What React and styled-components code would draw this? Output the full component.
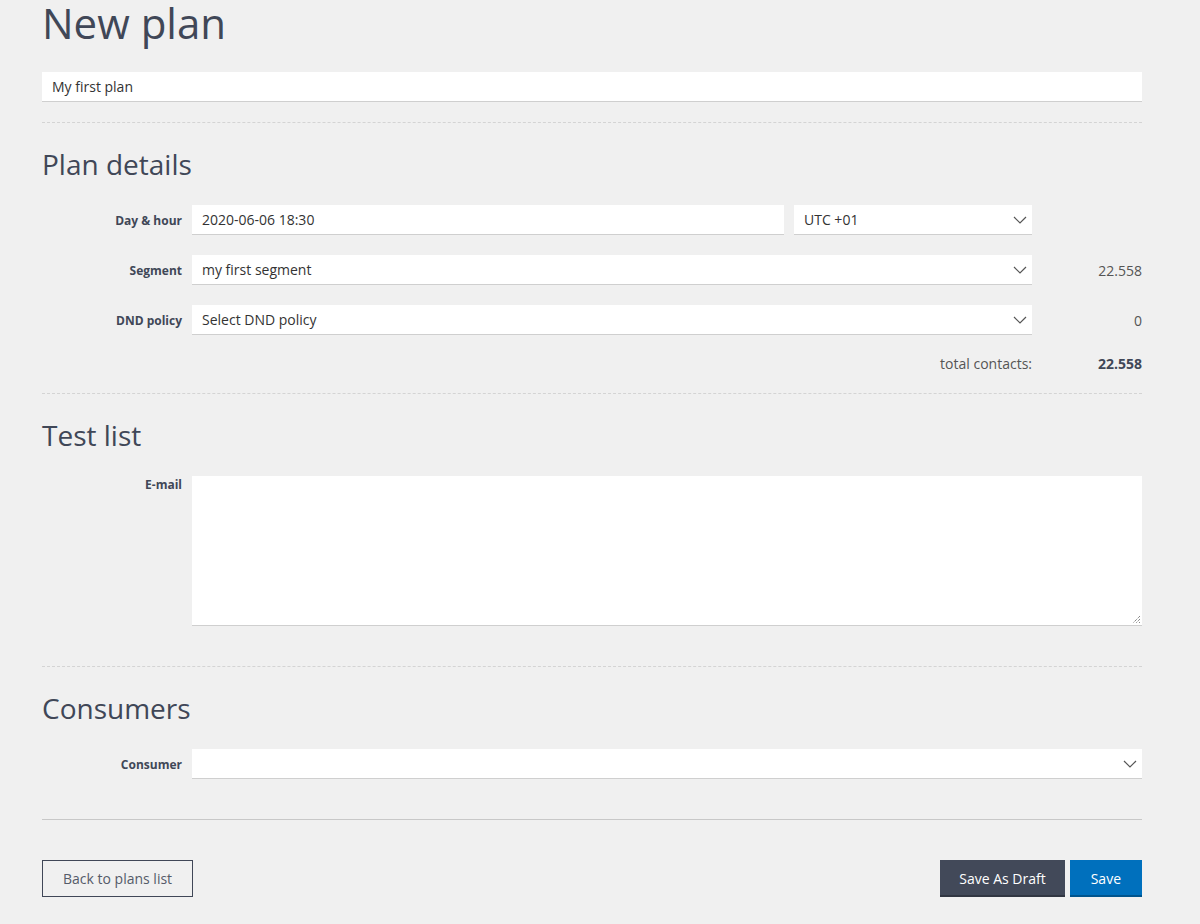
import React from "react";
import styled, {createGlobalStyle} from "styled-components";

const GlobalStyle = createGlobalStyle`
    html, body {
        margin: 0;
        padding: 0;
        background: #f0f0f0;
    }

    body {
        font-family: "Open Sans", "Liberation Sans", sans-serif;
        font-size: 14px;
        color: #333;
    }

    * {
        box-sizing: border-box;
    }
`;

const Page = styled.div`
    width: 1100px;
    margin-left: 42px;
`;

const Title = styled.h1`
    margin: 0 0 26px;
    font-weight: 400;
    font-size: 42px;
    line-height: 46px;
    color: #404757;
`;

const Divider = styled.hr`
    margin: 0;
    border: 0;
    border-top: 1px ${(props) => (props.solid ? "solid #c8c8c8" : "dashed #d4d4d4")};
`;

const Section = styled.section`
    padding: 24px 0 ${(props) => props.bottom || 40}px;
`;

const SectionTitle = styled.h2`
    margin: 0 0 24px;
    font-weight: 400;
    font-size: 28px;
    line-height: 34px;
    color: #404757;
`;

const Row = styled.div`
    display: grid;
    grid-template-columns: 140px ${(props) => (props.wide ? "1fr" : "840px 1fr")};
    column-gap: 10px;
    align-items: ${(props) => (props.top ? "start" : "center")};

    & + & {
        margin-top: 20px;
    }
`;

const Label = styled.label`
    padding-top: 1px;
    font-weight: 700;
    font-size: 12px;
    line-height: 16px;
    color: #404757;
    text-align: right;
`;

const Field = styled.div`
    display: flex;
    align-items: center;
    height: 30px;
    padding: 0 ${(props) => (props.select ? 5 : 10)}px 0 10px;
    background: #fff;
    border-bottom: 1px solid #cfcfcf;
    color: #333;
    font-size: 14px;
    flex: ${(props) => props.grow || "none"};
    width: ${(props) => (props.width ? `${props.width}px` : "auto")};
`;

const NameField = styled(Field)`
    margin-bottom: 20px;
`;

const FieldGroup = styled.div`
    display: flex;
    gap: 10px;
`;

const SelectText = styled.span`
    flex: 1;
`;

const Chevron = () => (
    <svg width="14" height="8" viewBox="0 0 14 8" fill="none">
        <path d="M1 1l6 6 6-6" stroke="#555" strokeWidth="1.2"/>
    </svg>
);

const Select = ({children, width, grow}) => (
    <Field select width={width} grow={grow}>
        <SelectText>{children}</SelectText>
        <Chevron/>
    </Field>
);

const Count = styled.div`
    text-align: right;
    color: #555;
    font-size: 14px;
`;

const Totals = styled.div`
    display: flex;
    justify-content: flex-end;
    align-items: center;
    height: 30px;
    margin-top: 13px;
    font-size: 14px;
    color: #555;

    strong {
        width: 110px;
        text-align: right;
        color: #404757;
    }
`;

const TextArea = styled.div`
    position: relative;
    height: 150px;
    background: #fff;
    border-bottom: 1px solid #cfcfcf;

    svg {
        position: absolute;
        right: 1px;
        bottom: 1px;
    }
`;

const Footer = styled.div`
    display: flex;
    justify-content: space-between;
    padding-top: 40px;
`;

const ButtonGroup = styled.div`
    display: flex;
    gap: 5px;
`;

const Button = styled.button`
    height: 37px;
    padding: 0 ${(props) => ({outline: 20, dark: 19, primary: 21}[props.variant])}px;
    border: ${(props) => (props.variant === "outline" ? "1px solid #404757" : "0")};
    background: ${(props) => ({outline: "transparent", dark: "#424959", primary: "#0070bd"}[props.variant])};
    color: ${(props) => (props.variant === "outline" ? "#555b69" : "#fff")};
    font-family: "Open Sans", "Liberation Sans", sans-serif;
    font-size: 14px;
    box-shadow: ${(props) => (props.variant === "outline" ? "none" : "inset 0 -2px 0 rgba(0,0,0,0.25)")};
`;

const Grip = () => (
    <svg width="9" height="9" viewBox="0 0 9 9">
        <path d="M8 1L1 8M8 4L4 8M8 7L7 8" stroke="#555" strokeWidth="1" strokeDasharray="1 1"/>
    </svg>
);

export default function App() {
    return (
        <Page>
            <GlobalStyle/>
            <Title>New plan</Title>
            <NameField>My first plan</NameField>
            <Divider/>

            <Section bottom={15}>
                <SectionTitle>Plan details</SectionTitle>
                <Row>
                    <Label>Day &amp; hour</Label>
                    <FieldGroup>
                        <Field grow="1">2020-06-06 18:30</Field>
                        <Select width={238}>UTC +01</Select>
                    </FieldGroup>
                </Row>
                <Row>
                    <Label>Segment</Label>
                    <Select>my first segment</Select>
                    <Count>22.558</Count>
                </Row>
                <Row>
                    <Label>DND policy</Label>
                    <Select>Select DND policy</Select>
                    <Count>0</Count>
                </Row>
                <Totals>
                    <span>total contacts:</span>
                    <strong>22.558</strong>
                </Totals>
            </Section>
            <Divider/>

            <Section>
                <SectionTitle>Test list</SectionTitle>
                <Row wide top>
                    <Label>E-mail</Label>
                    <TextArea><Grip/></TextArea>
                </Row>
            </Section>
            <Divider/>

            <Section>
                <SectionTitle>Consumers</SectionTitle>
                <Row wide>
                    <Label>Consumer</Label>
                    <Select/>
                </Row>
            </Section>
            <Divider solid/>

            <Footer>
                <Button variant="outline">Back to plans list</Button>
                <ButtonGroup>
                    <Button variant="dark">Save As Draft</Button>
                    <Button variant="primary">Save</Button>
                </ButtonGroup>
            </Footer>
        </Page>
    );
}
